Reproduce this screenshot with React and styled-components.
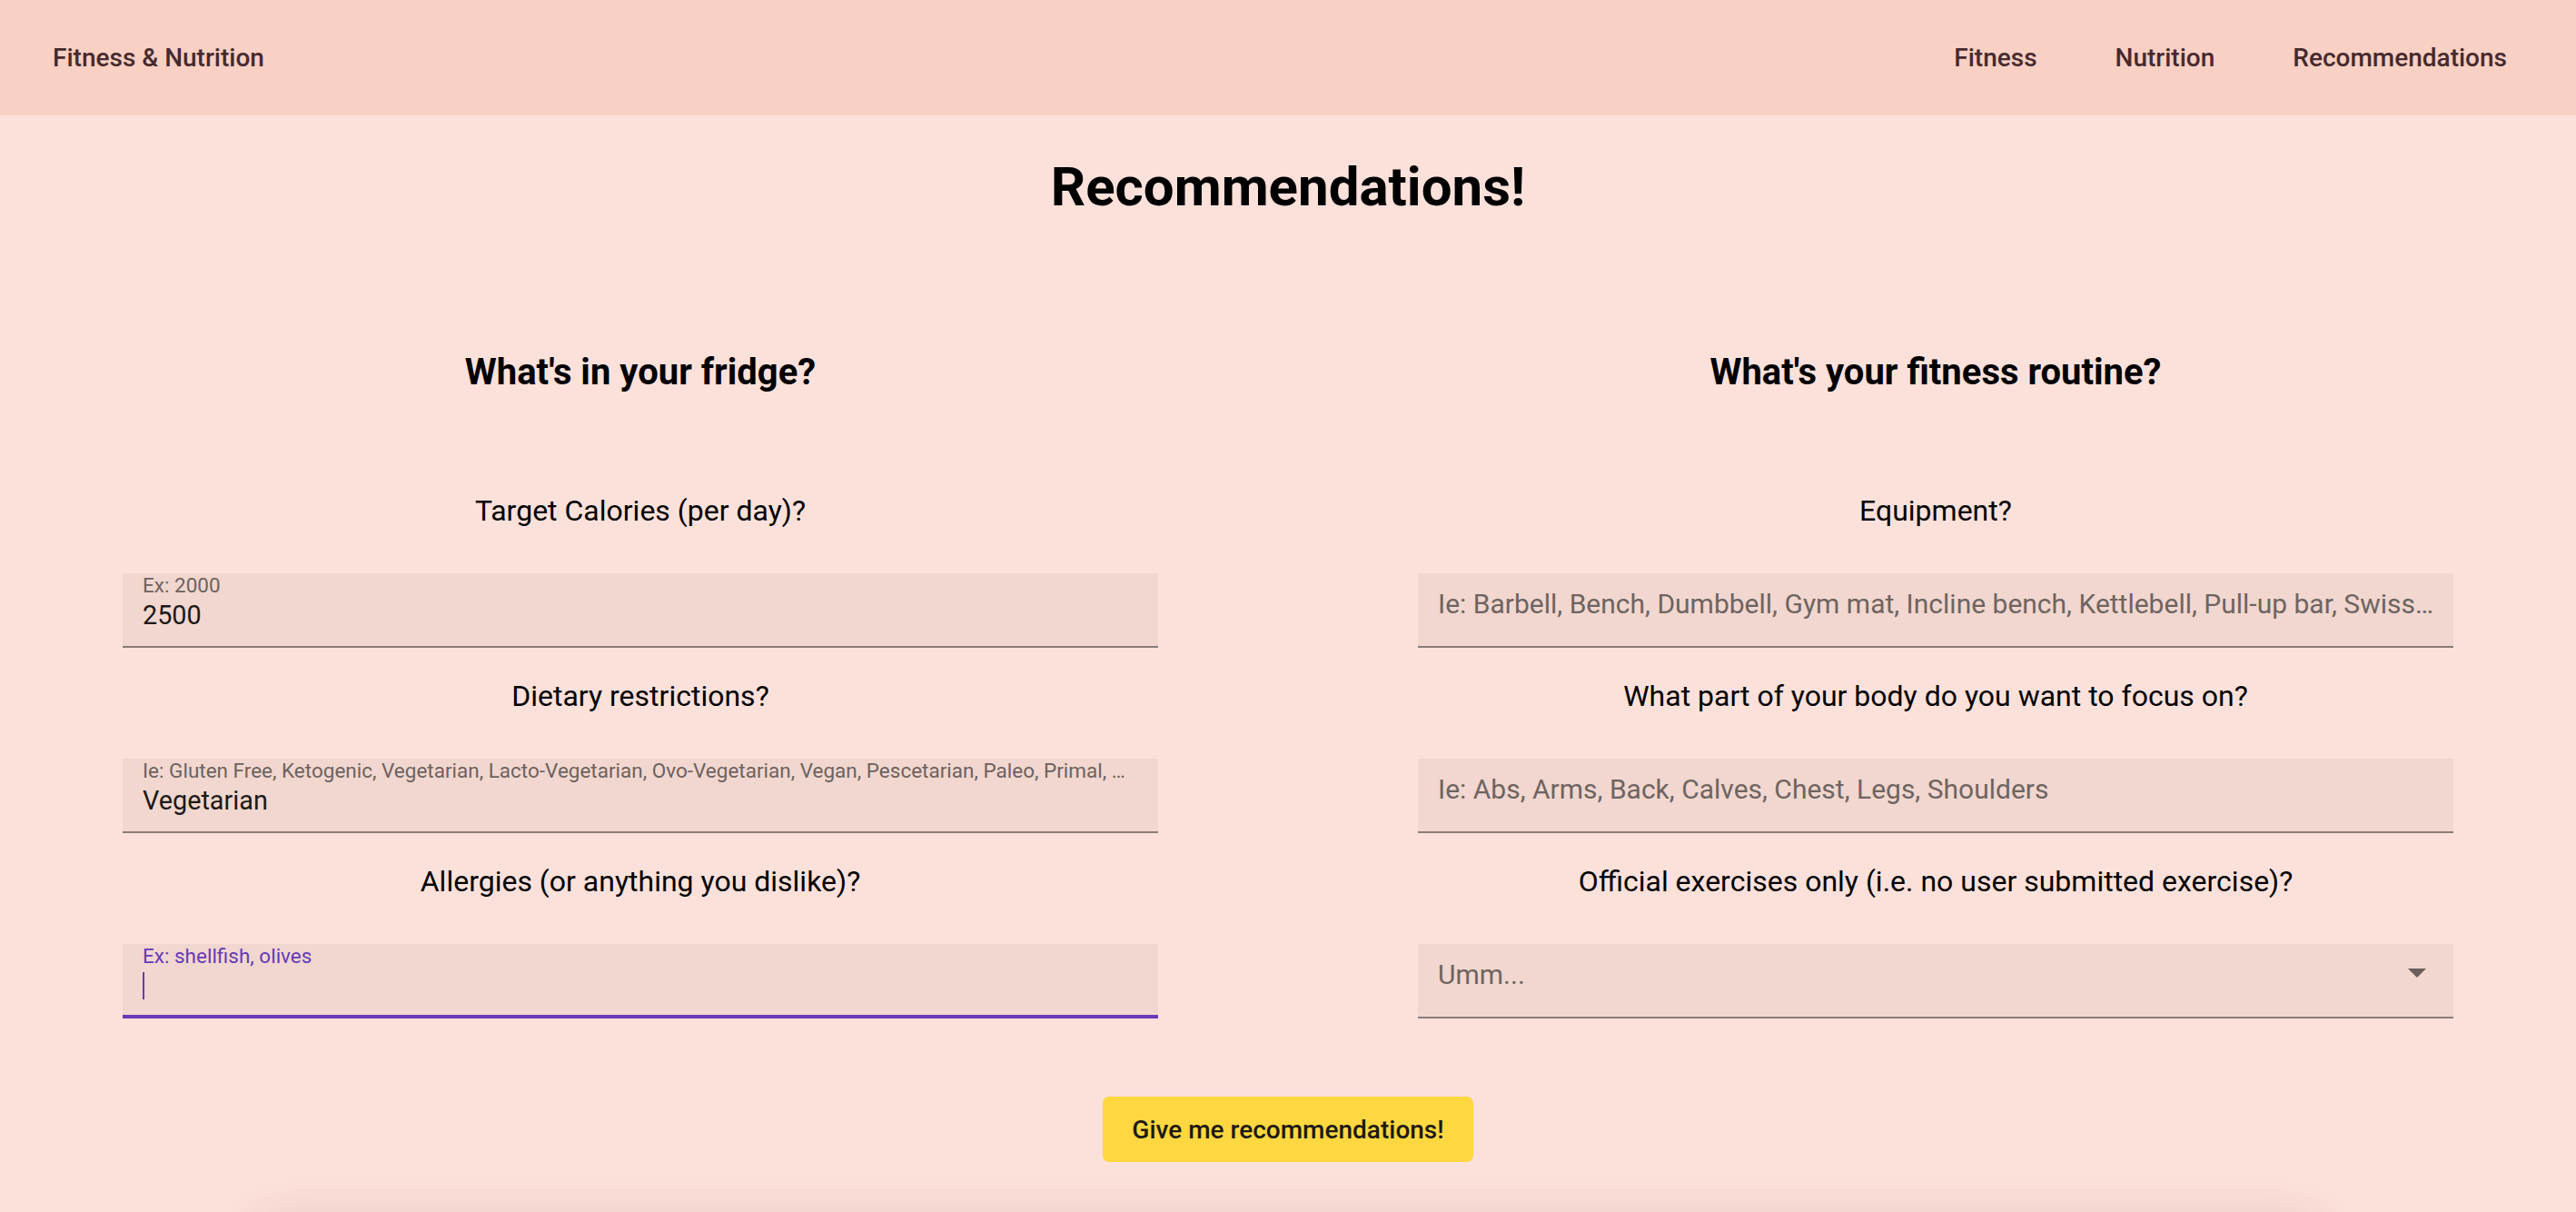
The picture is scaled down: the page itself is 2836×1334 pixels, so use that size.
import React from "react"
import styled, { createGlobalStyle } from "styled-components"

const GlobalStyle = createGlobalStyle`
  html {
    scrollbar-width: none;
  }
  html::-webkit-scrollbar,
  body::-webkit-scrollbar {
    display: none;
  }
  body {
    margin: 0;
    background: #fce1db;
    font-family: Roboto, "Liberation Sans", Arial, sans-serif;
    color: #000;
  }
`

const Header = styled.header`
  height: 127px;
  display: flex;
  align-items: center;
  justify-content: space-between;
  padding: 0 76px 0 58px;
  background: #f9d0c4;
  color: #462a2e;
  font-size: 28px;
  font-weight: 500;
`

const Brand = styled.span`
  white-space: nowrap;
`

const Nav = styled.nav`
  display: flex;
  gap: 86px;
`

const NavLink = styled.a`
  color: inherit;
  text-decoration: none;
  white-space: nowrap;
`

const Title = styled.h1`
  margin: 43px 0 0;
  font-size: 60px;
  line-height: 1.2;
  font-weight: 700;
  text-align: center;
`

const Columns = styled.div`
  display: grid;
  grid-template-columns: repeat(2, minmax(0, 1fr));
  column-gap: 286px;
  padding: 0 135px;
  margin-top: 144px;
`

const Column = styled.section`
  display: flex;
  flex-direction: column;
  min-width: 0;
`

const ColumnTitle = styled.h2`
  margin: 0 0 104px;
  font-size: 40px;
  line-height: 1.2;
  font-weight: 700;
  text-align: center;
`

const Question = styled.div`
  display: flex;
  flex-direction: column;
  & + & {
    margin-top: 29px;
  }
`

const QuestionLabel = styled.p`
  margin: 0 0 45px;
  font-size: 32px;
  line-height: 1.5;
  text-align: center;
`

const Field = styled.div`
  height: 82px;
  box-sizing: border-box;
  display: flex;
  flex-direction: column;
  padding: ${(p) => (p.$floating ? "0" : "16px")} 0 0 22px;
  background: #f1d7cf;
  border-bottom: ${(p) => (p.$focused ? "4px solid #673ab7" : "2px solid #8c7c78")};
  overflow: hidden;
`

const FloatLabel = styled.span`
  padding-right: 32px;
  font-size: 22.5px;
  line-height: 1.2;
  color: ${(p) => (p.$focused ? "#673ab7" : "#6e625f")};
  white-space: nowrap;
  overflow: hidden;
  text-overflow: ellipsis;
`

const Value = styled.span`
  display: flex;
  align-items: center;
  height: 34.5px;
  margin-top: 2px;
  font-size: 28.8px;
  line-height: 1.2;
  color: #1c1918;
`

const Caret = styled.span`
  width: 2px;
  height: 30px;
  background: #673ab7;
`

const Placeholder = styled.span`
  padding-right: 19px;
  font-size: 30px;
  line-height: 1.2;
  color: #6f6461;
  white-space: nowrap;
  overflow: hidden;
  text-overflow: ellipsis;
`

const SelectRow = styled.div`
  display: flex;
  justify-content: space-between;
  align-items: flex-start;
  padding-right: 30px;
`

const Arrow = styled.svg`
  flex: none;
  margin-top: 11px;
  fill: #6b5e5b;
`

const Actions = styled.div`
  display: flex;
  justify-content: center;
  margin-top: 86px;
`

const Button = styled.button`
  height: 72px;
  padding: 0 32px;
  border: none;
  border-radius: 7px;
  background: #ffd740;
  color: #1d1a12;
  font-family: inherit;
  font-size: 28px;
  font-weight: 500;
  cursor: pointer;
`

const ResultsCard = styled.section`
  width: 80%;
  height: 400px;
  margin: 72px auto 0;
  background: #fce1db;
  border-radius: 8px;
  box-shadow: 0 -6px 60px rgba(150, 80, 70, 0.2);
`

function Labelled({ label, children }) {
  return (
    <Question>
      <QuestionLabel>{label}</QuestionLabel>
      {children}
    </Question>
  )
}

export default function App() {
  return (
    <>
      <GlobalStyle />
      <Header>
        <Brand>Fitness &amp; Nutrition</Brand>
        <Nav>
          <NavLink href="#">Fitness</NavLink>
          <NavLink href="#">Nutrition</NavLink>
          <NavLink href="#">Recommendations</NavLink>
        </Nav>
      </Header>

      <Title>Recommendations!</Title>

      <Columns>
        <Column>
          <ColumnTitle>What's in your fridge?</ColumnTitle>
          <Labelled label="Target Calories (per day)?">
            <Field $floating>
              <FloatLabel>Ex: 2000</FloatLabel>
              <Value>2500</Value>
            </Field>
          </Labelled>
          <Labelled label="Dietary restrictions?">
            <Field $floating>
              <FloatLabel>
                Ie: Gluten Free, Ketogenic, Vegetarian, Lacto-Vegetarian, Ovo-Vegetarian, Vegan,
                Pescetarian, Paleo, Primal, Whole30, Low FODMAP
              </FloatLabel>
              <Value>Vegetarian</Value>
            </Field>
          </Labelled>
          <Labelled label="Allergies (or anything you dislike)?">
            <Field $floating $focused>
              <FloatLabel $focused>Ex: shellfish, olives</FloatLabel>
              <Value>
                <Caret />
              </Value>
            </Field>
          </Labelled>
        </Column>

        <Column>
          <ColumnTitle>What's your fitness routine?</ColumnTitle>
          <Labelled label="Equipment?">
            <Field>
              <Placeholder>
                Ie: Barbell, Bench, Dumbbell, Gym mat, Incline bench, Kettlebell, Pull-up bar, Swiss
                Ball, SZ-Bar
              </Placeholder>
            </Field>
          </Labelled>
          <Labelled label="What part of your body do you want to focus on?">
            <Field>
              <Placeholder>Ie: Abs, Arms, Back, Calves, Chest, Legs, Shoulders</Placeholder>
            </Field>
          </Labelled>
          <Labelled label="Official exercises only (i.e. no user submitted exercise)?">
            <Field>
              <SelectRow>
                <Placeholder>Umm...</Placeholder>
                <Arrow width="20" height="10" viewBox="0 0 10 5">
                  <path d="M0 0l5 5 5-5z" />
                </Arrow>
              </SelectRow>
            </Field>
          </Labelled>
        </Column>
      </Columns>

      <Actions>
        <Button>Give me recommendations!</Button>
      </Actions>

      <ResultsCard />
    </>
  )
}
